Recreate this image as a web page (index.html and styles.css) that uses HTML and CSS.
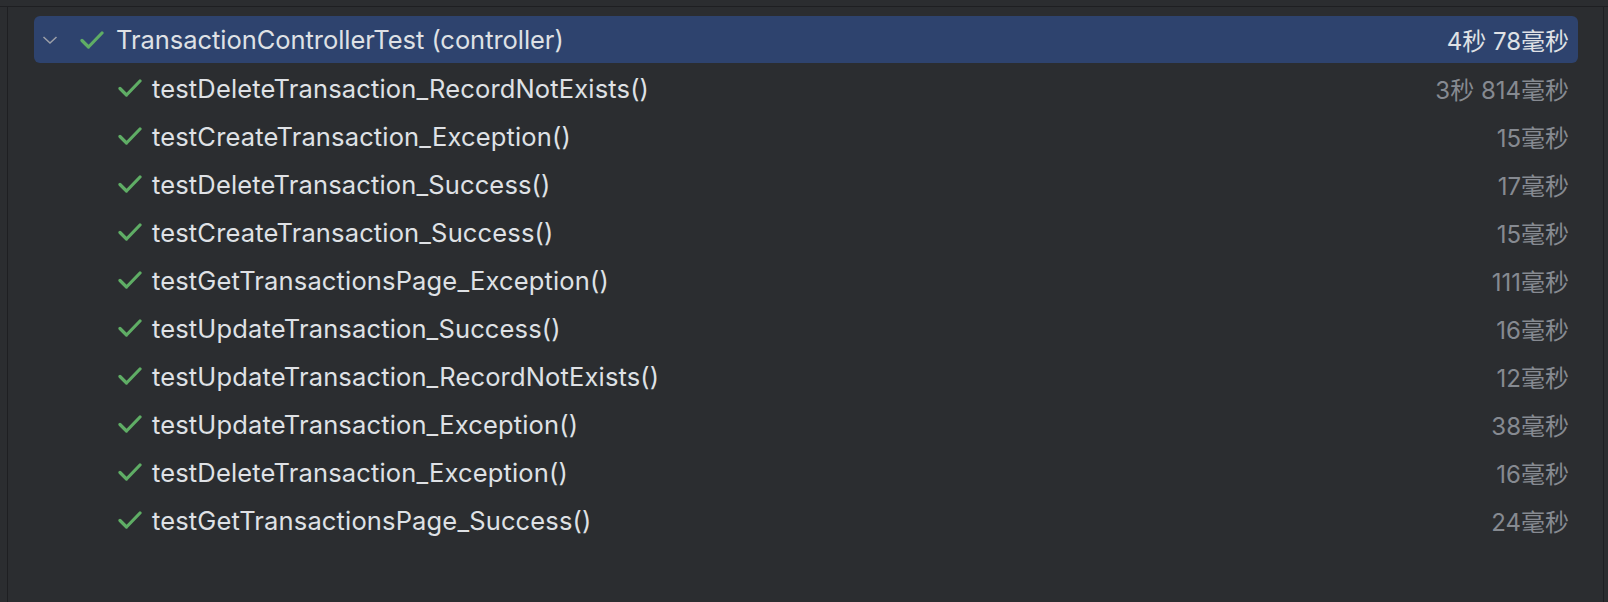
FILE: index.html
```html
<!DOCTYPE html>
<html lang="zh">
<head>
<meta charset="utf-8">
<link rel="stylesheet" href="styles.css">
</head>
<body>
<div class="top"></div>
<div class="frame">
  <div class="panel">
    <div class="row selected">
      <svg class="chev" width="16" height="10" viewBox="0 0 16 10"><polyline points="1.5,2 8,8 14.5,2" fill="none" stroke="#9da0a8" stroke-width="1.5"/></svg>
      <svg class="check" width="24" height="18" viewBox="0 0 24 18"><polyline points="2,9.5 8.5,16 22,2" fill="none" stroke="#5fad65" stroke-width="3.2" stroke-linecap="round" stroke-linejoin="round"/></svg>
      <span class="name">TransactionControllerTest (controller)</span>
      <span class="time">4秒 78毫秒</span>
    </div>
    <div class="row child"><svg class="check" width="24" height="18" viewBox="0 0 24 18"><polyline points="2,9.5 8.5,16 22,2" fill="none" stroke="#5fad65" stroke-width="3.2" stroke-linecap="round" stroke-linejoin="round"/></svg><span class="name">testDeleteTransaction_RecordNotExists()</span><span class="time">3秒 814毫秒</span></div>
    <div class="row child"><svg class="check" width="24" height="18" viewBox="0 0 24 18"><polyline points="2,9.5 8.5,16 22,2" fill="none" stroke="#5fad65" stroke-width="3.2" stroke-linecap="round" stroke-linejoin="round"/></svg><span class="name">testCreateTransaction_Exception()</span><span class="time">15毫秒</span></div>
    <div class="row child"><svg class="check" width="24" height="18" viewBox="0 0 24 18"><polyline points="2,9.5 8.5,16 22,2" fill="none" stroke="#5fad65" stroke-width="3.2" stroke-linecap="round" stroke-linejoin="round"/></svg><span class="name">testDeleteTransaction_Success()</span><span class="time">17毫秒</span></div>
    <div class="row child"><svg class="check" width="24" height="18" viewBox="0 0 24 18"><polyline points="2,9.5 8.5,16 22,2" fill="none" stroke="#5fad65" stroke-width="3.2" stroke-linecap="round" stroke-linejoin="round"/></svg><span class="name">testCreateTransaction_Success()</span><span class="time">15毫秒</span></div>
    <div class="row child"><svg class="check" width="24" height="18" viewBox="0 0 24 18"><polyline points="2,9.5 8.5,16 22,2" fill="none" stroke="#5fad65" stroke-width="3.2" stroke-linecap="round" stroke-linejoin="round"/></svg><span class="name">testGetTransactionsPage_Exception()</span><span class="time">111毫秒</span></div>
    <div class="row child"><svg class="check" width="24" height="18" viewBox="0 0 24 18"><polyline points="2,9.5 8.5,16 22,2" fill="none" stroke="#5fad65" stroke-width="3.2" stroke-linecap="round" stroke-linejoin="round"/></svg><span class="name">testUpdateTransaction_Success()</span><span class="time">16毫秒</span></div>
    <div class="row child"><svg class="check" width="24" height="18" viewBox="0 0 24 18"><polyline points="2,9.5 8.5,16 22,2" fill="none" stroke="#5fad65" stroke-width="3.2" stroke-linecap="round" stroke-linejoin="round"/></svg><span class="name">testUpdateTransaction_RecordNotExists()</span><span class="time">12毫秒</span></div>
    <div class="row child"><svg class="check" width="24" height="18" viewBox="0 0 24 18"><polyline points="2,9.5 8.5,16 22,2" fill="none" stroke="#5fad65" stroke-width="3.2" stroke-linecap="round" stroke-linejoin="round"/></svg><span class="name">testUpdateTransaction_Exception()</span><span class="time">38毫秒</span></div>
    <div class="row child"><svg class="check" width="24" height="18" viewBox="0 0 24 18"><polyline points="2,9.5 8.5,16 22,2" fill="none" stroke="#5fad65" stroke-width="3.2" stroke-linecap="round" stroke-linejoin="round"/></svg><span class="name">testDeleteTransaction_Exception()</span><span class="time">16毫秒</span></div>
    <div class="row child"><svg class="check" width="24" height="18" viewBox="0 0 24 18"><polyline points="2,9.5 8.5,16 22,2" fill="none" stroke="#5fad65" stroke-width="3.2" stroke-linecap="round" stroke-linejoin="round"/></svg><span class="name">testGetTransactionsPage_Success()</span><span class="time">24毫秒</span></div>
  </div>
</div>
</body>
</html>
```
FILE: styles.css
```css
html, body {
  margin: 0;
  padding: 0;
  background: #2b2d30;
  height: 100%;
  overflow: hidden;
}
body {
  font-family: Inter, "Noto Sans CJK SC", sans-serif;
  color: #dfe1e5;
  display: flex;
  flex-direction: column;
}
.top {
  height: 6px;
  background: #2b2d30;
  border-bottom: 1px solid #1e1f22;
  flex: none;
}
.frame {
  flex: 1;
  display: flex;
  padding: 0 4px 0 7px;
}
.panel {
  flex: 1;
  border-left: 1px solid #1e1f22;
  border-right: 1px solid #1e1f22;
  padding: 9px 25px 0 26px;
  display: flex;
  flex-direction: column;
}
.row {
  height: 48px;
  display: flex;
  align-items: center;
  font-size: 25.5px;
  padding-right: 9px;
  box-sizing: border-box;
}
.row.selected {
  height: 47px;
  margin-bottom: 1px;
  background: #2e436e;
  border-radius: 6px;
  padding-left: 8px;
}
.row.selected .name {
  letter-spacing: -0.05px;
}
.row.child {
  padding-left: 84px;
}
.row.child .name {
  letter-spacing: 0.15px;
}
.chev {
  margin-right: 22px;
  flex: none;
}
.check {
  flex: none;
  margin-right: 12px;
}
.row.child .check {
  margin-right: 10px;
}
.name {
  flex: 1;
  white-space: nowrap;
}
.time {
  color: #868a91;
  white-space: nowrap;
  font-size: 24px;
}
.selected .time {
  color: #dfe1e5;
}
```
